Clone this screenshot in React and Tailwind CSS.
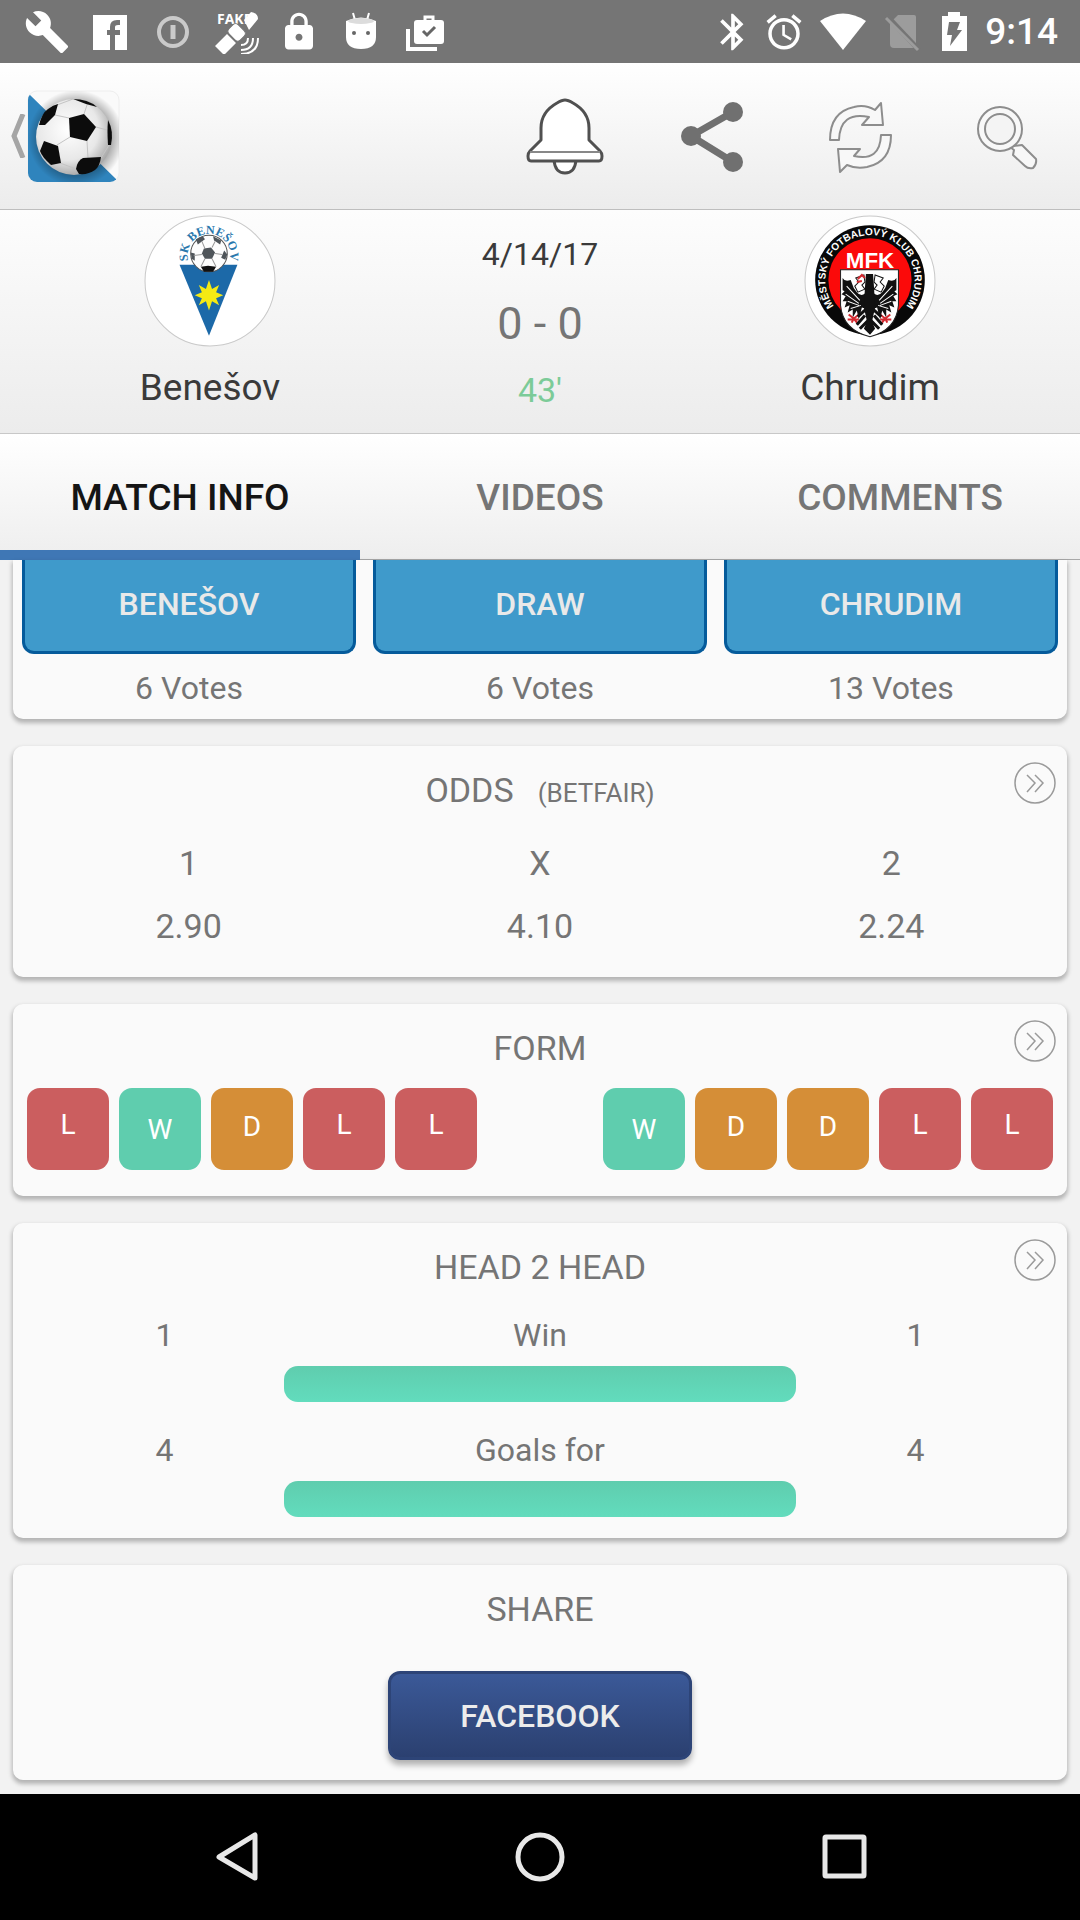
import React from "react";
import { MdBuild, MdLock, MdBluetooth, MdAlarm } from "react-icons/md";

const TILE = {
  L: "bg-[#cb5e5f] pb-2",
  W: "bg-[#5fcdae] pt-[2px]",
  D: "bg-[#d58e37] pb-1",
};

function AppLogo() {
  return (
    <svg viewBox="0 0 96 104" className="h-[104px] w-24" aria-hidden="true">
      <defs>
        <radialGradient id="ball" cx="0.42" cy="0.4" r="0.62">
          <stop offset="0" stopColor="#fff" />
          <stop offset="0.65" stopColor="#e8e8e8" />
          <stop offset="1" stopColor="#a8a8a8" />
        </radialGradient>
        <radialGradient id="halo">
          <stop offset="0.74" stopColor="#000" stopOpacity="0.3" />
          <stop offset="1" stopColor="#000" stopOpacity="0" />
        </radialGradient>
        <clipPath id="tile"><rect x="2" y="7" width="91" height="91" rx="9" /></clipPath>
      </defs>
      <rect x="2" y="7" width="91" height="91" rx="9" fill="#fafafa" stroke="#eee" />
      <g clipPath="url(#tile)">
        <path d="M2 9 4 11 90 95V99H2Z" fill="#2f84bd" />
        <circle cx="50" cy="54" r="48" fill="url(#halo)" />
      </g>
      <circle cx="48" cy="53" r="38" fill="url(#ball)" />
      <path d="M31 21 47 15M29 31 43 34M58 30 62 18M70 43 81 46M44 53 31 61M61 57 62 74M34 79 50 85M75 74 83 61" stroke="#c4c4c4" fill="none" />
      <g fill="#0c0c0c">
        <path d="M43 34 58 30 70 43 61 57 44 53Z" />
        <path d="M13 41Q16 29 22 25 27 21 32 20L29 31 19 41Z" />
        <path d="M47 15Q62 15 71 23L60 20Z" />
        <path d="M82 36Q88 47 85 61L82 61Q81 47 82 36Z" />
        <path d="M18 57 32 62 35 79 25 81Q16 73 14 67Z" />
        <path d="M57 74 75 73Q74 82 69 86 62 91 53 90L50 85Q51 77 57 74Z" />
      </g>
    </svg>
  );
}

function Benesov() {
  return (
    <svg viewBox="0 0 130 130" className="size-[132px]" role="img" aria-label="SK Benešov crest">
      <defs><path id="benesovCurve" d="M44 46A21 21 0 1 1 84 46" /></defs>
      <circle cx="65" cy="65" r="64" fill="#fff" stroke="#c9c9c9" />
      <path d="M35 49H92L64 119Z" fill="#1c69a8" />
      <text fontFamily="Liberation Serif, serif" fontWeight="700" fontSize="12" fill="#2a78ad" textAnchor="middle">
        <textPath href="#benesovCurve" startOffset="50%">SK BENEŠOV</textPath>
      </text>
      <circle cx="64" cy="38" r="18" fill="#fdfdfd" stroke="#555" />
      <g fill="#4f555a">
        <path d="M59 33 66 32 70 37 67 43 60 43 57 38Z" />
        <path d="M51 24 58 21 60 24 53 29Z" />
        <path d="M68 21 76 25 75 29 69 25Z" />
        <path d="M46 37 50 38 50 45 47 43Z" />
        <path d="M79 35 82 39 80 44 76 42Z" />
        <path d="M56 51 63 50 71 51 68 56H59Z" fill="#111" />
      </g>
      <path d="M60 33 57 26M67 32 70 26M70 38 77 39M57 39 49 40M60 43 56 51M67 43 71 51" stroke="#999" />
      <path d="M64 64 67 73 74 69 71 76 78 79 71 82 74 89 67 85 64 94 61 85 54 89 57 82 50 79 57 76 54 69 61 73Z" fill="#f5ea14" />
    </svg>
  );
}

function Wing() {
  return (
    <g>
      <path d="M63 73Q58 83 52 76L49 72 46 64Q40 66 38 62L38 74 40 75 37 78 41 80 38 85 42 85 40 91 45 89 43 96 48 93 48 101 52 94 54 103 57 91 63 93Z" fill="#111" />
      <path d="M42 70 55 84M41 78 54 87M43 85 54 89M46 92 56 89" stroke="#fff" />
      <path d="M44 98 49 102 47 106M54 98 49 102 53 107M43 103H54" stroke="#d42b31" strokeWidth="2" fill="none" />
      <path d="M62 92 53 100M60 99 52 108M64 103 55 112" stroke="#111" strokeWidth="3" />
      <path d="M51 62 59 59 60 66 57 69 60 73 53 76 50 70 54 66Z" fill="#fff" stroke="#111" />
    </g>
  );
}

function Chrudim() {
  return (
    <svg viewBox="0 0 130 130" className="size-[132px]" role="img" aria-label="MFK Chrudim crest">
      <defs><path id="chrudimCurve" d="M34 95A44 44 0 1 1 96 95" /></defs>
      <circle cx="65" cy="65" r="64" fill="#fff" stroke="#c9c9c9" />
      <circle cx="65" cy="64" r="54" fill="#080808" />
      <circle cx="65" cy="64" r="41" fill="#fb0a0a" />
      <text fontFamily="Liberation Sans, sans-serif" fontWeight="700" fontSize="10" fill="#fff" textAnchor="middle">
        <textPath href="#chrudimCurve" startOffset="50%">MĚSTSKÝ FOTBALOVÝ KLUB CHRUDIM</textPath>
      </text>
      <text x="65" y="52" textAnchor="middle" fontFamily="Liberation Sans, sans-serif" fontWeight="700" fontSize="22" fill="#fff">MFK</text>
      <path d="M36 54H93V89Q91 113 65 120 38 113 36 89Z" fill="#fff" stroke="#222" />
      <Wing />
      <g transform="translate(129 0) scale(-1 1)"><Wing /></g>
      <path d="M61 58 68 58 69 72 70 91 67 105 70 112 65 118 59 112 62 105 59 91 60 72Z" fill="#111" />
      <path d="M53 63 57 59 60 62M52 66 57 65" stroke="#d42b31" strokeWidth="2" fill="none" />
    </svg>
  );
}

function StatusBar() {
  return (
    <div className="flex h-[63px] items-center justify-between bg-[#757575] pr-[22px] pl-6 text-white">
      <div className="flex items-center gap-[19px]">
        <MdBuild className="size-[46px]" />
        <svg viewBox="0 0 44 44" className="size-11" fill="#fff" fillRule="evenodd">
          <path d="M4 5H38V40H4ZM21 40H26V25H31V20H26V17Q26 15 29 15H31V10H28Q21 10 21 17V20H18V25H21Z" />
        </svg>
        <svg viewBox="0 0 44 44" className="size-11" fill="none" stroke="#cacaca">
          <circle cx="21" cy="22" r="14" strokeWidth="4" />
          <path d="M21 15V29" strokeWidth="5" />
        </svg>
        <svg viewBox="0 0 44 44" className="size-11" fill="#fff">
          <text x="2" y="14" fontFamily="Open Sans, sans-serif" fontWeight="700" fontSize="14">FAKE</text>
          <path d="M29 10 36 2Q43 3 43 9L34 20ZM0 36 12 24 21 33 9 45Z" />
          <rect x="14" y="16" width="16" height="13" rx="4" transform="rotate(45 22 22)" stroke="#757575" />
          <path d="M33 28Q33 35 26 35M38 28Q38 40 26 40M43 28Q43 44 26 44" fill="none" stroke="#fff" strokeWidth="2" />
        </svg>
        <MdLock className="size-[42px]" />
        <svg viewBox="0 0 44 44" className="size-11" fill="#fff">
          <path d="M7 11Q22 4 37 11V27Q37 39 22 39 7 39 7 27Z" />
          <path d="M14 3 16 10M30 3 28 10" stroke="#fff" strokeWidth="2" />
          <ellipse cx="22" cy="11" rx="13" ry="3" fill="#dcdcdc" />
          <circle cx="15" cy="23" r="2" fill="#666" /><circle cx="29" cy="23" r="2" fill="#666" />
        </svg>
        <svg viewBox="0 0 44 44" className="size-11" fill="none">
          <path d="M6 19V39H35" stroke="#fff" strokeWidth="4" />
          <path d="M23 12V7H31V12" stroke="#fff" strokeWidth="3" />
          <rect x="12" y="10" width="30" height="24" rx="3" fill="#fff" />
          <path d="M21 21 25 25 33 17" stroke="#666" strokeWidth="3" />
        </svg>
      </div>
      <div className="flex items-center gap-2">
        <MdBluetooth className="size-11" />
        <MdAlarm className="size-[42px]" />
        <svg viewBox="0 0 52 44" className="ml-1 h-11 w-[52px]" fill="#fff"><path d="M3 11Q26-4 49 11L26 40Z" /></svg>
        <svg viewBox="0 0 44 44" className="ml-1 size-11" fill="#9c9c9c">
          <path d="M9 13 17 5H33Q35 5 35 7V34Q35 38 31 38H13Q9 38 9 34Z" />
          <path d="M6 6 38 40" stroke="#757575" strokeWidth="5" />
          <path d="M5 8 37 40" stroke="#9c9c9c" strokeWidth="3" />
        </svg>
        <svg viewBox="0 0 44 44" className="size-11" fill="#fff">
          <path d="M9 6H15V2H27V6H34V41H9Z" />
          <path d="M16 12H27L24 20H29L17 36 19 25H14Z" fill="#757575" />
        </svg>
        <span className="text-[37px] leading-none font-medium">9:14</span>
      </div>
    </div>
  );
}

function Toolbar() {
  return (
    <header className="flex h-[147px] items-center justify-between border-b border-[#bebebe] bg-linear-to-b from-white to-[#ececec] pr-8 pl-[10px]">
      <button aria-label="Back" className="flex items-center">
        <svg viewBox="0 0 16 44" className="h-11 w-4" fill="none" stroke="#a5a5a5" strokeWidth="5"><path d="M13 0 4 22 13 44" /></svg>
        <AppLogo />
      </button>
      <div className="flex items-center gap-[70px]">
        <button aria-label="Notifications">
          <svg viewBox="0 0 78 78" className="size-[78px]" fill="#fff" stroke="#505050" strokeWidth="3" strokeLinejoin="round">
            <path d="M28 63Q29 76 39 76 49 76 50 63Z" />
            <path d="M39 3Q36 3 31 6 15 15 15 31V43L4 54Q2 56 2 59 2 64 5 64H73Q76 64 76 59 76 56 74 54L63 43V31Q63 15 47 6 42 3 39 3Z" />
            <path d="M4 55H74" stroke="#888" strokeWidth="2" />
          </svg>
        </button>
        <button aria-label="Share">
          <svg viewBox="0 0 78 78" className="size-[78px]" fill="#707070">
            <path d="M59 15 17 39 59 65" fill="none" stroke="#707070" strokeWidth="7" />
            <circle cx="17" cy="39" r="10" /><circle cx="59" cy="15" r="10" /><circle cx="59" cy="65" r="10" />
          </svg>
        </button>
        <button aria-label="Refresh">
          <svg viewBox="0 0 78 78" className="size-[78px]" fill="#f8f8f8" stroke="#8d8d8d" strokeWidth="2" strokeLinejoin="round">
            <path d="M8 43Q8 15 32 10 43 7 53 13L59 6 61 28H40L47 20Q18 14 17 43Z" />
            <path d="M69 38Q69 65 45 70 34 72 25 68L18 75 16 52H38L32 59Q58 65 59 38Z" />
          </svg>
        </button>
        <button aria-label="Search">
          <svg viewBox="0 0 78 78" className="size-[78px]" fill="#f8f8f8" stroke="#8d8d8d" strokeWidth="2" strokeLinejoin="round">
            <path d="M43 49 52 48 66 62Q67 67 63 71 58 72 55 69L43 58 44 53 40 50Z" />
            <circle cx="30" cy="32" r="22" /><circle cx="30" cy="32" r="15" fill="#f4f4f4" />
          </svg>
        </button>
      </div>
    </header>
  );
}

function Team({ name, children }) {
  return (
    <div className="flex flex-col items-center gap-5 pt-[5px] text-[37px] leading-[42px] text-[#3a3a3a]">
      {children}
      <span>{name}</span>
    </div>
  );
}

function Card({ title, note, more = true, className, children }) {
  return (
    <section className={`relative rounded-[10px] bg-[#fafafa] shadow-[0_3px_4px_1px_rgba(0,0,0,0.26)] ${className}`}>
      <h2 className="flex items-baseline justify-center gap-6 text-[34px] leading-10">
        {title}
        {note && <small className="text-[26px]">{note}</small>}
      </h2>
      {more && (
        <button aria-label={`More ${title}`} className="absolute top-4 right-[11px]">
          <svg viewBox="0 0 42 42" className="size-[42px]" fill="none" stroke="#9a9a9a" strokeWidth="1.500">
            <circle cx="21" cy="21" r="20" />
            <path d="M13 13 21 21 13 30M21 13 29 21 21 30" />
          </svg>
        </button>
      )}
      {children}
    </section>
  );
}

function Tiles({ results }) {
  return (
    <div className="flex gap-[10px]">
      {results.map((r, i) => (
        <span key={i} className={`flex size-[82px] items-center justify-center rounded-[13px] text-[28px] text-white ${TILE[r]}`}>{r}</span>
      ))}
    </div>
  );
}

function Stat({ label, home, away }) {
  return (
    <div className="grid grid-cols-[9fr_17fr_9fr] gap-y-[11px] text-center text-[32px] leading-10">
      <span className="pl-8">{home}</span>
      <span>{label}</span>
      <span className="pr-8">{away}</span>
      <span className="col-start-2 h-9 rounded-[14px] bg-linear-to-b from-[#5fcdae] to-[#62dcbd]" />
    </div>
  );
}

export default function App() {
  return (
    <div className="flex min-h-screen flex-col bg-[#f2f2f2] font-['Roboto',sans-serif] text-[#757575]">
      <StatusBar />
      <Toolbar />
      <div className="grid h-[224px] grid-cols-[420px_1fr_420px] border-b border-[#c8c8c8] bg-linear-to-b from-[#fdfdfd] to-[#ececec]">
        <Team name="Benešov"><Benesov /></Team>
        <div className="flex flex-col items-center pt-6 text-center">
          <span className="text-[32px] leading-10 text-[#3a3a3a]">4/14/17</span>
          <span className="mt-[22px] text-[45px] leading-[56px]">0 - 0</span>
          <span className="mt-[18px] text-[34px] leading-10 text-[#7ccb98]">43'</span>
        </div>
        <Team name="Chrudim"><Chrudim /></Team>
      </div>
      <nav className="grid h-[126px] grid-cols-3 border-b border-[#a8a8a8] bg-linear-to-b from-white to-[#eeeeee] text-[37px] font-medium">
        <button className="-mb-px border-b-[10px] border-[#3f77b5] pt-3 text-[#151515]">MATCH INFO</button>
        <button className="pt-[3px]">VIDEOS</button>
        <button className="pt-[3px]">COMMENTS</button>
      </nav>
      <main className="flex flex-1 flex-col gap-[27px] px-[13px] pb-[14px]">
        <section className="grid grid-cols-3 gap-x-[17px] rounded-b-[10px] bg-[#fafafa] px-[9px] pb-[11px] text-center text-[32px] shadow-[0_3px_4px_1px_rgba(0,0,0,0.26)]">
          {[["BENEŠOV", "6 Votes"], ["DRAW", "6 Votes"], ["CHRUDIM", "13 Votes"]].map(([name, votes]) => (
            <div key={name}>
              <button className="h-[94px] w-full rounded-b-[12px] border-x-[3px] border-b-[3px] border-[#055b9b] bg-[#3f9acb] pb-1 text-[32px] font-medium text-[#e9e9e9]">{name}</button>
              <p className="mt-[14px] leading-10">{votes}</p>
            </div>
          ))}
        </section>
        <Card title="ODDS" note="(BETFAIR)" className="h-[231px] pt-6">
          <table className="mt-[19px] w-full table-fixed text-center text-[34px] leading-[63px]">
            <thead><tr>{["1", "X", "2"].map((v) => <th key={v} className="font-normal">{v}</th>)}</tr></thead>
            <tbody><tr>{["2.90", "4.10", "2.24"].map((v) => <td key={v}>{v}</td>)}</tr></tbody>
          </table>
        </Card>
        <Card title="FORM" className="h-48 pt-6">
          <div className="mt-5 flex justify-between px-[14px]">
            <Tiles results={["L", "W", "D", "L", "L"]} />
            <Tiles results={["W", "D", "D", "L", "L"]} />
          </div>
        </Card>
        <Card title="HEAD 2 HEAD" className="h-[315px] pt-6">
          <div className="mt-7 grid gap-7">
            <Stat label="Win" home="1" away="1" />
            <Stat label="Goals for" home="4" away="4" />
          </div>
        </Card>
        <Card title="SHARE" more={false} className="flex h-[215px] flex-col items-center pt-6">
          <button className="mt-[42px] h-[89px] w-[304px] rounded-[12px] border-[3px] border-[#2d4477] bg-linear-to-b from-[#3b5998] to-[#2b4070] text-[32px] font-medium text-[#ececec] shadow-[0_5px_6px_rgba(0,0,0,0.3)]">FACEBOOK</button>
        </Card>
      </main>
      <nav className="flex h-[126px] items-center justify-center gap-[250px] bg-black">
        <button aria-label="Back">
          <svg viewBox="0 0 54 54" className="size-[54px]" fill="none" stroke="#e8e8e8" strokeWidth="5" strokeLinejoin="round"><path d="M46 5V48L10 27Z" /></svg>
        </button>
        <button aria-label="Home">
          <svg viewBox="0 0 54 54" className="size-[54px]" fill="none" stroke="#e8e8e8" strokeWidth="5"><circle cx="27" cy="27" r="22" /></svg>
        </button>
        <button aria-label="Overview">
          <svg viewBox="0 0 54 54" className="size-[54px]" fill="none" stroke="#e8e8e8" strokeWidth="5"><rect x="8" y="7" width="39" height="39" rx="1" /></svg>
        </button>
      </nav>
    </div>
  );
}
